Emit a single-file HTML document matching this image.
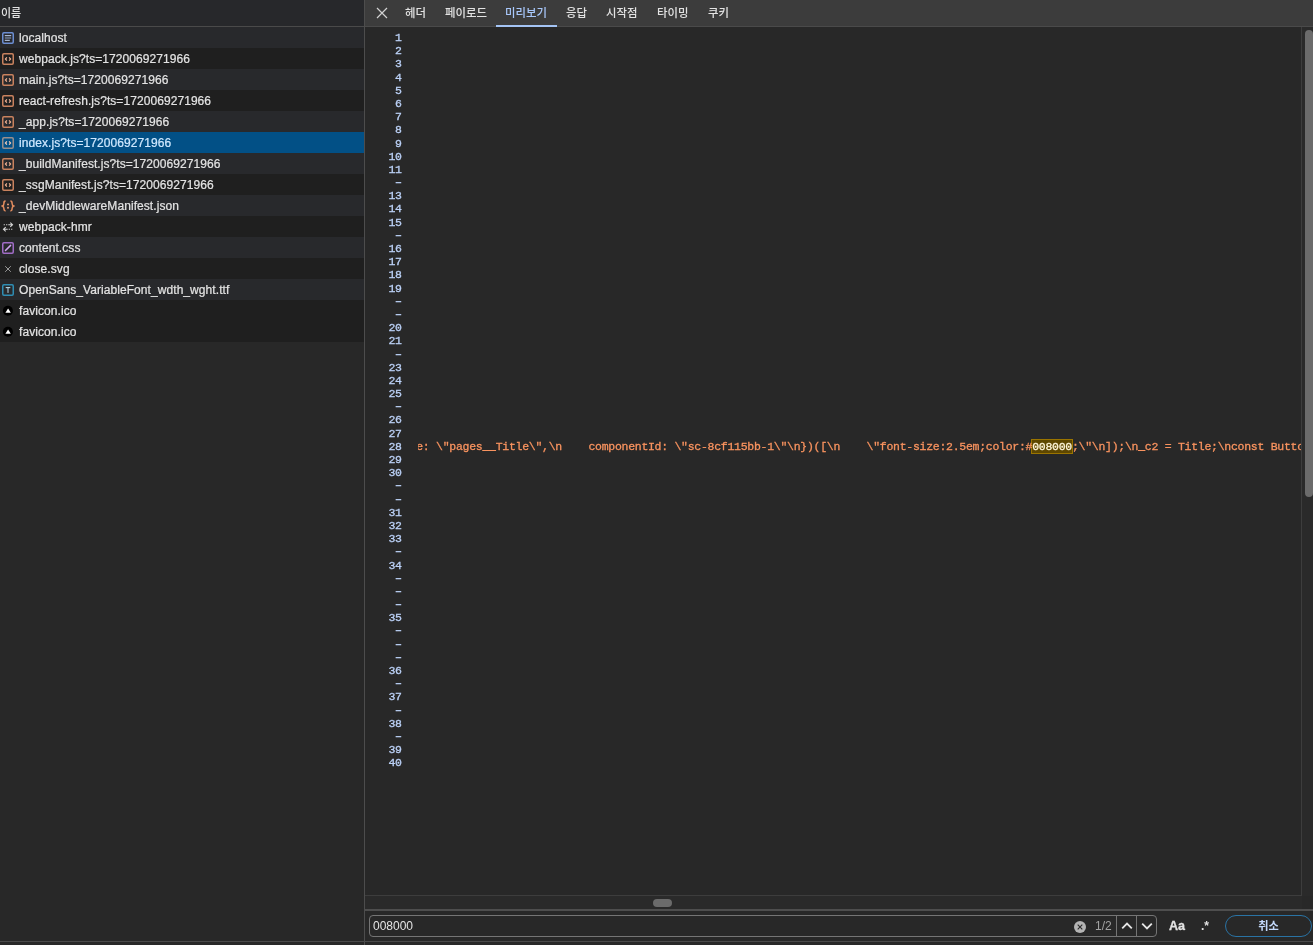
<!DOCTYPE html>
<html lang="ko"><head><meta charset="utf-8"><title>DevTools</title>
<style>
*{box-sizing:border-box;margin:0;padding:0}
html,body{width:1313px;height:945px;overflow:hidden;background:#282828}
body{position:relative;font-family:"Liberation Sans","Noto Sans CJK KR",sans-serif;font-size:12px;color:#e3e3e3}
.abs{position:absolute}
#left,#lhead,.tab,#gutter,#code,#sq,#cnt,#aa,#re,#cancel{will-change:transform}
#left{left:0;top:0;width:364px;height:941px;background:#282828;overflow:hidden}
#lhead{left:0;top:0;width:364px;height:26px;background:#27282b;border-bottom:1px solid #4a4a4a;height:27px;line-height:27px;padding-left:1px;font-size:11px;font-weight:500}
.row{position:absolute;left:0;width:364px;height:21px;line-height:23px;letter-spacing:0.07px;white-space:nowrap;padding-left:19px;font-size:12px;color:#e3e3e3}
.row.o{background:#28292c}
.row.e{background:#1f1f1f}
.row.sel{background:#025086;color:#cfe8ff}
.row{-webkit-text-stroke:0.22px currentColor}
.ic{position:absolute;left:2px;top:5px;width:12px;height:12px}
#vdiv{left:364px;top:0;width:1px;height:945px;background:#4d4d4d}
#tabs{left:365px;top:0;width:948px;height:27px;background:#3c3c3c;border-bottom:1px solid #4a4a4a}
.tab{position:absolute;top:0;height:26px;line-height:27px;font-size:11.4px;font-weight:500;color:#e3e3e3;white-space:nowrap}
.tab.sel{color:#a8c7fa}
#ul{left:496px;top:25px;width:61px;height:2px;background:#a4c4f5}
#gutter{left:365px;top:31.0px;width:36.7px;text-align:right;font-family:"Liberation Mono",monospace;font-size:11.5px;letter-spacing:-0.277px;line-height:13.19px;color:#bcd2f8;white-space:pre;-webkit-text-stroke:0.3px #bcd2f8}
#gutter .d{position:relative;top:-1px;-webkit-text-stroke:0.5px #bcd2f8}
#code{left:418px;top:439.89px;width:883px;height:14px;overflow:hidden;font-family:"Liberation Mono",monospace;font-size:11.5px;letter-spacing:-0.277px;line-height:13.19px;color:#f9935f;white-space:pre;-webkit-text-stroke:0.3px #f9935f}
#code i{font-style:normal;display:inline-block;margin-left:-1.85px}
#hl{color:#fff6da;-webkit-text-stroke:0.3px #fff6da}
#hlbox{left:1031px;top:439px;width:42px;height:15px;background:#5e4700;border:1px solid #9a7400}
#vtrack{left:1301px;top:27px;width:12px;height:869px;background:#2a2a2a;border-left:1px solid #3d3d3d}
#vthumb{left:1305px;top:30px;width:8px;height:467px;background:#6b6b6b;border-radius:4px}
#htrack{left:365px;top:895px;width:937px;height:14px;background:#2a2a2a;border-top:1px solid #3d3d3d}
#hthumb{left:653px;top:899px;width:19px;height:8px;background:#6b6b6b;border-radius:4px}
#sbar{left:365px;top:909px;width:948px;height:32px;background:#282828;border-top:2px solid #4e4e4e}
#bline{left:0;top:941px;width:1313px;height:1px;background:#4a4a4a}
#sin{left:369px;top:915px;width:788px;height:22px;border:1px solid #757575;border-radius:4px}
#sq{left:373px;top:915px;height:22px;line-height:23px;font-size:12px;color:#e3e3e3}
.sep{position:absolute;top:915px;width:1px;height:22px;background:#757575}
#cnt{left:1095px;top:915px;height:22px;line-height:22px;font-size:12px;color:#a3a3a3}
#aa{left:1168.500px;top:915px;height:22px;line-height:23px;font-size:12.5px;font-weight:bold;color:#e3e3e3;-webkit-text-stroke:0.3px #e3e3e3}
#re{left:1201px;top:915px;height:22px;line-height:23px;font-size:12px;font-weight:bold;color:#e3e3e3}
#cancel{left:1225px;top:915px;width:87px;height:22px;border:1px solid #2a73a4;border-radius:11px;text-align:center;line-height:20px;font-size:11.2px;color:#c3d9fb;font-weight:700}
svg{display:block}
</style></head><body>

<div id="left" class="abs">
<div id="lhead" class="abs">이름</div>
<div class="row o" style="top:27px"><svg class="ic" viewBox="0 0 12 12"><rect x=".75" y=".75" width="10.500" height="10.500" rx="1.200" fill="none" stroke="#6c8ed2" stroke-width="1.500"/><path d="M2.800 3.700h6.400M2.800 8.300h5" stroke="#c5d8fa" stroke-width="1" fill="none"/><path d="M2.800 6h6.400" stroke="#8fa4c8" stroke-width="1" fill="none"/></svg>localhost</div>
<div class="row e" style="top:48px"><svg class="ic" viewBox="0 0 12 12"><rect x=".75" y=".75" width="10.500" height="10.500" rx="1.200" fill="none" stroke="#c9825e" stroke-width="1.500"/><path d="M4.900 4.300L3.400 6l1.500 1.700M7.100 4.300L8.600 6 7.100 7.700" stroke="#f3b394" stroke-width="1.200" fill="none"/></svg>webpack.js?ts=1720069271966</div>
<div class="row o" style="top:69px"><svg class="ic" viewBox="0 0 12 12"><rect x=".75" y=".75" width="10.500" height="10.500" rx="1.200" fill="none" stroke="#c9825e" stroke-width="1.500"/><path d="M4.900 4.300L3.400 6l1.500 1.700M7.100 4.300L8.600 6 7.100 7.700" stroke="#f3b394" stroke-width="1.200" fill="none"/></svg>main.js?ts=1720069271966</div>
<div class="row e" style="top:90px"><svg class="ic" viewBox="0 0 12 12"><rect x=".75" y=".75" width="10.500" height="10.500" rx="1.200" fill="none" stroke="#c9825e" stroke-width="1.500"/><path d="M4.900 4.300L3.400 6l1.500 1.700M7.100 4.300L8.600 6 7.100 7.700" stroke="#f3b394" stroke-width="1.200" fill="none"/></svg>react-refresh.js?ts=1720069271966</div>
<div class="row o" style="top:111px"><svg class="ic" viewBox="0 0 12 12"><rect x=".75" y=".75" width="10.500" height="10.500" rx="1.200" fill="none" stroke="#c9825e" stroke-width="1.500"/><path d="M4.900 4.300L3.400 6l1.500 1.700M7.100 4.300L8.600 6 7.100 7.700" stroke="#f3b394" stroke-width="1.200" fill="none"/></svg>_app.js?ts=1720069271966</div>
<div class="row sel" style="top:132px"><svg class="ic" viewBox="0 0 12 12"><rect x=".75" y=".75" width="10.500" height="10.500" rx="1.200" fill="none" stroke="#988f8d" stroke-width="1.500"/><path d="M4.900 4.300L3.400 6l1.500 1.700M7.100 4.300L8.600 6 7.100 7.700" stroke="#f6cdbb" stroke-width="1.200" fill="none"/></svg>index.js?ts=1720069271966</div>
<div class="row o" style="top:153px"><svg class="ic" viewBox="0 0 12 12"><rect x=".75" y=".75" width="10.500" height="10.500" rx="1.200" fill="none" stroke="#c9825e" stroke-width="1.500"/><path d="M4.900 4.300L3.400 6l1.500 1.700M7.100 4.300L8.600 6 7.100 7.700" stroke="#f3b394" stroke-width="1.200" fill="none"/></svg>_buildManifest.js?ts=1720069271966</div>
<div class="row e" style="top:174px"><svg class="ic" viewBox="0 0 12 12"><rect x=".75" y=".75" width="10.500" height="10.500" rx="1.200" fill="none" stroke="#c9825e" stroke-width="1.500"/><path d="M4.900 4.300L3.400 6l1.500 1.700M7.100 4.300L8.600 6 7.100 7.700" stroke="#f3b394" stroke-width="1.200" fill="none"/></svg>_ssgManifest.js?ts=1720069271966</div>
<div class="row o" style="top:195px"><svg class="ic" style="left:1px;width:14px" viewBox="0 0 14 12"><path d="M4.600 1.100c-1.700 0-1.700.8-1.700 2.300 0 1.300-.3 2.100-1.600 2.600 1.300.5 1.600 1.300 1.600 2.600 0 1.500 0 2.300 1.700 2.300M9.400 1.100c1.700 0 1.700.8 1.700 2.300 0 1.300.3 2.100 1.600 2.600-1.300.5-1.600 1.300-1.600 2.600 0 1.500 0 2.300-1.700 2.300" stroke="#e28d5f" stroke-width="1.500" fill="none"/><circle cx="7" cy="4.400" r=".95" fill="#f0a47c"/><circle cx="7" cy="7.700" r=".95" fill="#f0a47c"/></svg>_devMiddlewareManifest.json</div>
<div class="row e" style="top:216px"><svg class="ic" viewBox="0 0 12 12"><path d="M1.700 3.700h1.200M4.100 3.700h1.200M6.300 3.700h4.200M8.300 1.600l2.200 2.100-2.200 2.100M10.300 8.300H9.100M7.900 8.300H6.700M5.700 8.300H1.500M3.700 6.200L1.500 8.300l2.200 2.100" stroke="#d6d6d6" stroke-width="1.100" fill="none"/></svg>webpack-hmr</div>
<div class="row o" style="top:237px"><svg class="ic" viewBox="0 0 12 12"><rect x=".75" y=".75" width="10.500" height="10.500" rx="1.200" fill="none" stroke="#a06cc6" stroke-width="1.500"/><path d="M3.500 8.500L8.600 3.400" stroke="#cfa4ee" stroke-width="1.500" stroke-linecap="round" fill="none"/></svg>content.css</div>
<div class="row e" style="top:258px"><svg class="ic" viewBox="0 0 12 12"><path d="M3.200 3.200l5.600 5.600M8.800 3.200l-5.600 5.600" stroke="#a6a6a6" stroke-width=".9" fill="none"/></svg>close.svg</div>
<div class="row o" style="top:279px"><svg class="ic" viewBox="0 0 12 12"><rect x=".75" y=".75" width="10.500" height="10.500" rx="1.200" fill="none" stroke="#2f8db3" stroke-width="1.500"/><path d="M3.700 3.600h4.600" stroke="#b4d6e6" stroke-width="1.100" fill="none"/><path d="M6 3.600v5.300" stroke="#b4d6e6" stroke-width="1" fill="none"/></svg>OpenSans_VariableFont_wdth_wght.ttf</div>
<div class="row e" style="top:300px"><svg class="ic" viewBox="0 0 12 12"><circle cx="5.900" cy="5.700" r="5" fill="#000"/><path d="M6.100 3.500L8.800 7.700H3.400z" fill="#fff"/></svg>favicon.ico</div>
<div class="row e" style="top:321px"><svg class="ic" viewBox="0 0 12 12"><circle cx="5.900" cy="5.700" r="5" fill="#000"/><path d="M6.100 3.500L8.800 7.700H3.400z" fill="#fff"/></svg>favicon.ico</div>
</div>
<div id="vdiv" class="abs"></div>
<div id="tabs" class="abs"></div>
<svg class="abs" style="left:376px;top:7px;width:12px;height:12px" viewBox="0 0 12 12"><path d="M1 1l10 10M11 1L1 11" stroke="#d2d2d2" stroke-width="1.2" fill="none"/></svg>
<div class="tab" style="left:405px">헤더</div>
<div class="tab" style="left:445px">페이로드</div>
<div class="tab sel" style="left:505px">미리보기</div>
<div class="tab" style="left:566px">응답</div>
<div class="tab" style="left:606px">시작점</div>
<div class="tab" style="left:656.5px">타이밍</div>
<div class="tab" style="left:708px">쿠키</div>
<div id="ul" class="abs"></div>
<div id="gutter" class="abs">1
2
3
4
5
6
7
8
9
10
11
<span class=d>–</span>
13
14
15
<span class=d>–</span>
16
17
18
19
<span class=d>–</span>
<span class=d>–</span>
20
21
<span class=d>–</span>
23
24
25
<span class=d>–</span>
26
27
28
29
30
<span class=d>–</span>
<span class=d>–</span>
31
32
33
<span class=d>–</span>
34
<span class=d>–</span>
<span class=d>–</span>
<span class=d>–</span>
35
<span class=d>–</span>
<span class=d>–</span>
<span class=d>–</span>
36
<span class=d>–</span>
37
<span class=d>–</span>
38
<span class=d>–</span>
39
40</div>
<div id="hlbox" class="abs"></div>
<div id="code" class="abs"><i>e: \"pages__Title\",\n    componentId: \"sc-8cf115bb-1\"\n})([\n    \"font-size:2.5em;color:#<span id="hl">008000</span>;\"\n]);\n_c2 = Title;\nconst Button = styled.button</i></div>
<div id="vtrack" class="abs"></div><div id="vthumb" class="abs"></div>
<div id="htrack" class="abs"></div><div id="hthumb" class="abs"></div>
<div id="sbar" class="abs"></div>
<div id="sin" class="abs"></div><div id="sq" class="abs">008000</div>
<svg class="abs" style="left:1074px;top:920.500px;width:12px;height:12px" viewBox="0 0 12 12"><circle cx="6" cy="6" r="6" fill="#b4b4b4"/><path d="M3.700 3.700l4.600 4.600M8.300 3.700l-4.600 4.600" stroke="#2a2a2a" stroke-width="1.100" fill="none"/></svg>
<div id="cnt" class="abs">1/2</div>
<div class="sep" style="left:1116px"></div><div class="sep" style="left:1136px"></div>
<svg class="abs" style="left:1121px;top:920px;width:12px;height:12px" viewBox="0 0 12 12"><path d="M1.200 8.300L6 3.500l4.800 4.800" stroke="#e6e6e6" stroke-width="1.800" fill="none"/></svg>
<svg class="abs" style="left:1141px;top:919.500px;width:12px;height:12px" viewBox="0 0 12 12"><path d="M1.200 3.700L6 8.500l4.800-4.800" stroke="#e6e6e6" stroke-width="1.800" fill="none"/></svg>
<div id="aa" class="abs">Aa</div><div id="re" class="abs">.*</div>
<div id="cancel" class="abs">취소</div>
<div id="bline" class="abs"></div>
</body></html>
